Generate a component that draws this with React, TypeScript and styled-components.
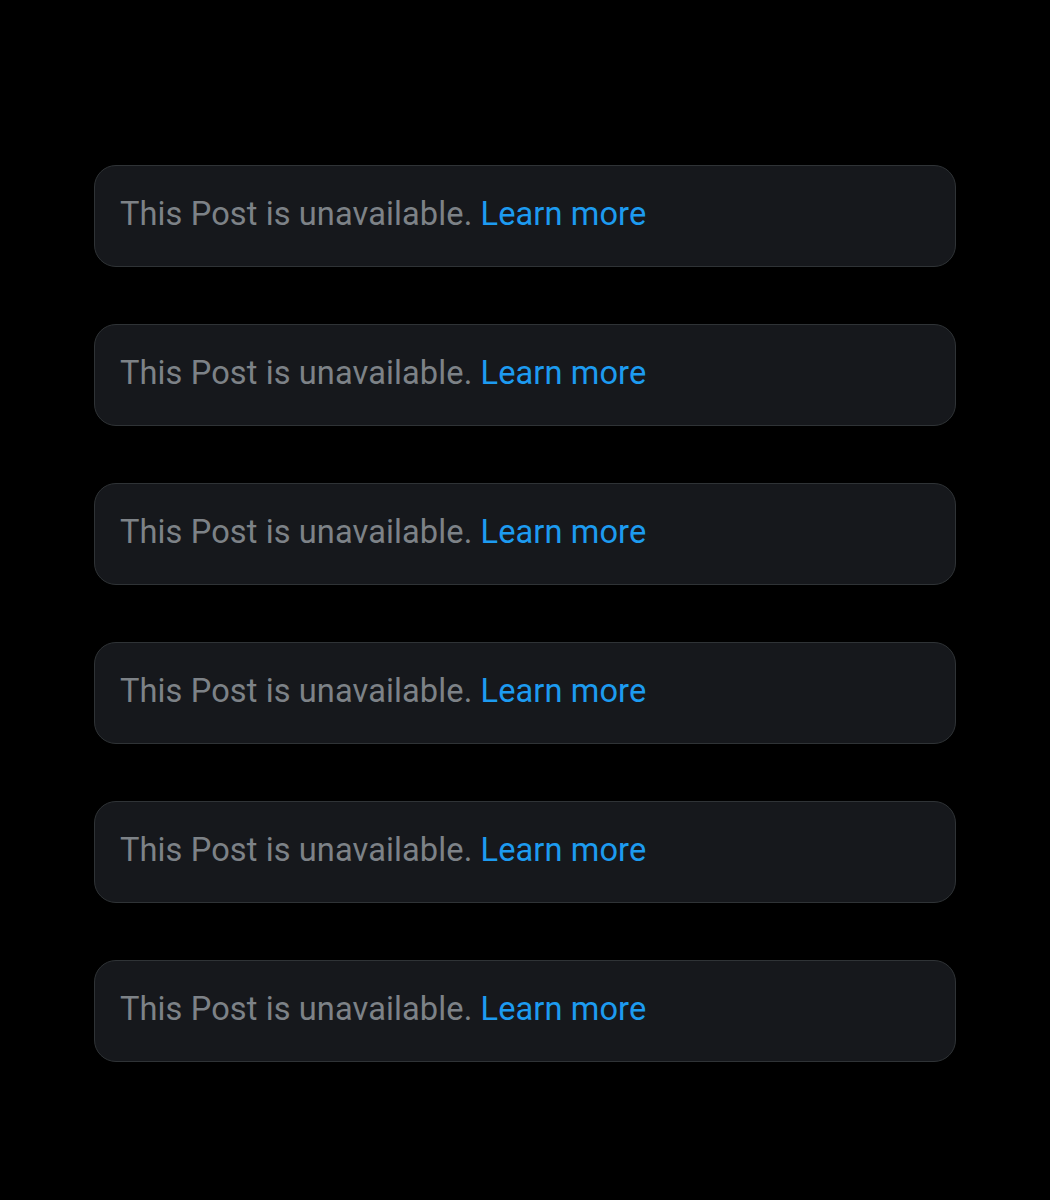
import React from "react";
import styled, { createGlobalStyle } from "styled-components";

const Global = createGlobalStyle`
  html, body { margin: 0; padding: 0; background: #000; }
  body { font-family: Roboto, "Liberation Sans", sans-serif; }
`;

const Page = styled.main`
  min-height: 1200px;
  background: #000;
  padding: 165px 0 0 94px;
  box-sizing: border-box;
`;

const List = styled.div`
  display: flex;
  flex-direction: column;
  gap: 57px;
  width: 862px;
`;

const Card = styled.div`
  box-sizing: border-box;
  height: 102px;
  border: 1px solid #2f3336;
  border-radius: 22px;
  background: #16181c;
  display: flex;
  align-items: center;
  padding: 0 25px 4px;
`;

const Message = styled.p`
  margin: 0;
  font-size: 32.6px;
  line-height: 40px;
  color: #7d8287;
  letter-spacing: 0.1px;
`;

const Link = styled.a`
  color: #1d9bf0;
  text-decoration: none;
`;

export default function App() {
  return (
    <>
      <Global />
      <Page>
        <List>
          {Array.from({ length: 6 }).map((_, i) => (
            <Card key={i}>
              <Message>
                This Post is unavailable. <Link href="#">Learn more</Link>
              </Message>
            </Card>
          ))}
        </List>
      </Page>
    </>
  );
}
